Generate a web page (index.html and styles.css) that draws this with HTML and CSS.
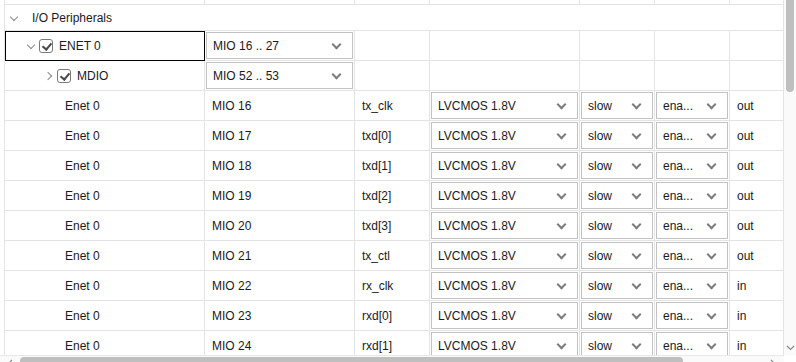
FILE: index.html
```html
<!DOCTYPE html>
<html lang="en">
<head>
  <meta charset="UTF-8">
  <title>I/O Peripherals</title>
  <link rel="stylesheet" href="styles.css">
</head>
<body>
<div class="frame">
  <div class="main">
    <div class="table">
      <div class="row row-cut">
        <div class="cell"></div><div class="cell"></div><div class="cell"></div><div class="cell"></div>
        <div class="cell"></div><div class="cell"></div><div class="cell"></div>
      </div>

      <div class="row row-group">
        <div class="cell cell-wide">
          <span class="twisty down"></span>
          <span class="label">I/O Peripherals</span>
        </div>
      </div>

      <div class="row">
        <div class="cell cell-tree selected level-1">
          <span class="twisty down"></span>
          <span class="check"></span>
          <span class="label">ENET 0</span>
        </div>
        <div class="cell"><div class="combo">MIO 16 .. 27</div></div>
        <div class="cell"></div><div class="cell"></div><div class="cell"></div><div class="cell"></div><div class="cell"></div>
      </div>

      <div class="row">
        <div class="cell cell-tree level-2">
          <span class="twisty right"></span>
          <span class="check"></span>
          <span class="label">MDIO</span>
        </div>
        <div class="cell"><div class="combo">MIO 52 .. 53</div></div>
        <div class="cell"></div><div class="cell"></div><div class="cell"></div><div class="cell"></div><div class="cell"></div>
      </div>

      <div class="row">
        <div class="cell cell-name">Enet 0</div>
        <div class="cell cell-text">MIO 16</div>
        <div class="cell cell-text">tx_clk</div>
        <div class="cell"><div class="combo">LVCMOS 1.8V</div></div>
        <div class="cell"><div class="combo">slow</div></div>
        <div class="cell"><div class="combo">ena...</div></div>
        <div class="cell cell-text">out</div>
      </div>
      <div class="row">
        <div class="cell cell-name">Enet 0</div>
        <div class="cell cell-text">MIO 17</div>
        <div class="cell cell-text">txd[0]</div>
        <div class="cell"><div class="combo">LVCMOS 1.8V</div></div>
        <div class="cell"><div class="combo">slow</div></div>
        <div class="cell"><div class="combo">ena...</div></div>
        <div class="cell cell-text">out</div>
      </div>
      <div class="row">
        <div class="cell cell-name">Enet 0</div>
        <div class="cell cell-text">MIO 18</div>
        <div class="cell cell-text">txd[1]</div>
        <div class="cell"><div class="combo">LVCMOS 1.8V</div></div>
        <div class="cell"><div class="combo">slow</div></div>
        <div class="cell"><div class="combo">ena...</div></div>
        <div class="cell cell-text">out</div>
      </div>
      <div class="row">
        <div class="cell cell-name">Enet 0</div>
        <div class="cell cell-text">MIO 19</div>
        <div class="cell cell-text">txd[2]</div>
        <div class="cell"><div class="combo">LVCMOS 1.8V</div></div>
        <div class="cell"><div class="combo">slow</div></div>
        <div class="cell"><div class="combo">ena...</div></div>
        <div class="cell cell-text">out</div>
      </div>
      <div class="row">
        <div class="cell cell-name">Enet 0</div>
        <div class="cell cell-text">MIO 20</div>
        <div class="cell cell-text">txd[3]</div>
        <div class="cell"><div class="combo">LVCMOS 1.8V</div></div>
        <div class="cell"><div class="combo">slow</div></div>
        <div class="cell"><div class="combo">ena...</div></div>
        <div class="cell cell-text">out</div>
      </div>
      <div class="row">
        <div class="cell cell-name">Enet 0</div>
        <div class="cell cell-text">MIO 21</div>
        <div class="cell cell-text">tx_ctl</div>
        <div class="cell"><div class="combo">LVCMOS 1.8V</div></div>
        <div class="cell"><div class="combo">slow</div></div>
        <div class="cell"><div class="combo">ena...</div></div>
        <div class="cell cell-text">out</div>
      </div>
      <div class="row">
        <div class="cell cell-name">Enet 0</div>
        <div class="cell cell-text">MIO 22</div>
        <div class="cell cell-text">rx_clk</div>
        <div class="cell"><div class="combo">LVCMOS 1.8V</div></div>
        <div class="cell"><div class="combo">slow</div></div>
        <div class="cell"><div class="combo">ena...</div></div>
        <div class="cell cell-text">in</div>
      </div>
      <div class="row">
        <div class="cell cell-name">Enet 0</div>
        <div class="cell cell-text">MIO 23</div>
        <div class="cell cell-text">rxd[0]</div>
        <div class="cell"><div class="combo">LVCMOS 1.8V</div></div>
        <div class="cell"><div class="combo">slow</div></div>
        <div class="cell"><div class="combo">ena...</div></div>
        <div class="cell cell-text">in</div>
      </div>
      <div class="row">
        <div class="cell cell-name">Enet 0</div>
        <div class="cell cell-text">MIO 24</div>
        <div class="cell cell-text">rxd[1]</div>
        <div class="cell"><div class="combo">LVCMOS 1.8V</div></div>
        <div class="cell"><div class="combo">slow</div></div>
        <div class="cell"><div class="combo">ena...</div></div>
        <div class="cell cell-text">in</div>
      </div>
    </div>

    <div class="vscroll">
      <div class="thumb-v"></div>
      <svg class="arrow-down" width="9" height="6" viewBox="0 0 9 6"><polyline points="1,1 4.5,4.5 8,1" fill="none" stroke="#8a8a8a" stroke-width="1.2"/></svg>
    </div>
  </div>

  <div class="hscroll">
    <svg class="arrow-left" width="6" height="9" viewBox="0 0 6 9"><polyline points="5,1 1.5,4.5 5,8" fill="none" stroke="#8a8a8a" stroke-width="1.2"/></svg>
    <div class="thumb-h"></div>
    <svg class="arrow-right" width="6" height="9" viewBox="0 0 6 9"><polyline points="1,1 4.5,4.5 1,8" fill="none" stroke="#8a8a8a" stroke-width="1.2"/></svg>
  </div>
</div>
</body>
</html>
```

FILE: styles.css
```css
:root {
    --grid-line: #e4e4e4;
    --combo-border: #c2c2c2;
    --chevron: #7c7c7c;
    --text-color: #1a1a1a;
    --thumb: #bfbfbf;
}

* {
    box-sizing: border-box;
    margin: 0;
    padding: 0;
}

body {
    font-family: "Liberation Sans", Arial, sans-serif;
    font-size: 12px;
    color: var(--text-color);
    background: #fff;
}

.frame {
    width: 796px;
    height: 362px;
    overflow: hidden;
}

.main {
    display: flex;
    height: 355px;
}

/* table */

.table {
    width: 784px;
    height: 355px;
    flex: none;
    overflow: hidden;
    padding-left: 4px;
}

.row {
    display: grid;
    grid-template-columns: 200px 150px 75px 150px 75px 75px 54px;
    height: 30px;
    border-left: 1px solid var(--grid-line);
}

.row-cut {
    height: 5px;
}

.row-group {
    height: 26px;
    grid-template-columns: 779px;
}

.cell {
    border-right: 1px solid var(--grid-line);
    border-bottom: 1px solid var(--grid-line);
    display: flex;
    align-items: center;
    white-space: nowrap;
}

.cell-wide {
    padding-left: 5px;
}

.cell-wide .twisty {
    margin-right: 14px;
}

.cell-tree.level-1 {
    padding-left: 22px;
}

.cell-tree.level-2 {
    padding-left: 40px;
}

.cell.selected {
    outline: 1px solid #000;
    outline-offset: -1px;
}

.cell-name {
    padding-left: 60px;
}

.cell-text {
    padding-left: 7px;
}

/* tree twisty */

.twisty {
    width: 8px;
    height: 8px;
    position: relative;
    flex: none;
    margin-right: 4px;
}

.twisty::before {
    content: "";
    position: absolute;
    width: 5px;
    height: 5px;
    border-right: 1px solid #8a8a8a;
    border-bottom: 1px solid #8a8a8a;
}

.twisty.down::before {
    left: 1px;
    top: 0;
    transform: rotate(45deg);
}

.twisty.right::before {
    left: 0;
    top: 1px;
    transform: rotate(-45deg);
}

/* checkbox */

.check {
    width: 14px;
    height: 14px;
    border: 1px solid #7a7a7a;
    border-radius: 3px;
    position: relative;
    flex: none;
    margin-right: 6px;
}

.check::after {
    content: "";
    position: absolute;
    left: 4px;
    top: 1px;
    width: 4px;
    height: 7px;
    border-right: 2px solid #4a4a4a;
    border-bottom: 2px solid #4a4a4a;
    transform: rotate(40deg);
}

/* combo box */

.combo {
    flex: 1;
    align-self: stretch;
    margin: 1px;
    border: 1px solid var(--combo-border);
    display: flex;
    align-items: center;
    padding-left: 6px;
    position: relative;
}

.combo::after {
    content: "";
    position: absolute;
    right: 12px;
    top: 8px;
    width: 5px;
    height: 5px;
    border-right: 2px solid var(--chevron);
    border-bottom: 2px solid var(--chevron);
    transform: rotate(45deg);
}

/* scrollbars */

.vscroll {
    width: 12px;
    height: 355px;
    flex: none;
    background: #fafafa;
    padding: 0 0 4px 2px;
    display: flex;
    flex-direction: column;
    justify-content: space-between;
}

.thumb-v {
    width: 8px;
    height: 92px;
    background: var(--thumb);
    border-radius: 0 0 4px 4px;
}

.arrow-down {
    display: block;
}

.hscroll {
    width: 784px;
    height: 7px;
    border-top: 1px solid #e8e8e8;
    background: #fafafa;
    display: flex;
    align-items: flex-start;
    padding: 1px 0 0 7px;
}

.thumb-h {
    margin-left: 7px;
    width: 663px;
    height: 8px;
    flex: none;
    background: var(--thumb);
    border-radius: 4px;
}

.arrow-left,
.arrow-right {
    flex: none;
    margin-top: 2px;
}

.arrow-right {
    margin-left: 87px;
}
```
